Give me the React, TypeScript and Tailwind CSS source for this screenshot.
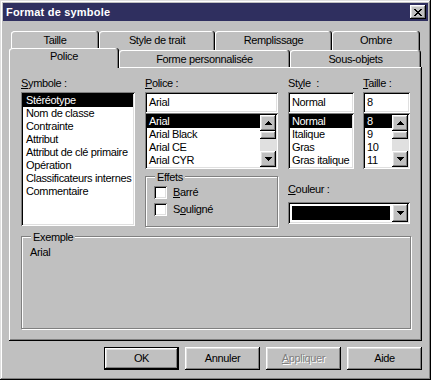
import React from "react"

const sunken =
  "shadow-[inset_1px_1px_0_#808080,inset_-1px_-1px_0_#ffffff,inset_2px_2px_0_#000000,inset_-2px_-2px_0_#dfdfdf]"
const raised =
  "shadow-[inset_-1px_-1px_0_#000000,inset_1px_1px_0_#ffffff,inset_-2px_-2px_0_#808080,inset_2px_2px_0_#dfdfdf]"
const etched = "border border-[#808080] shadow-[inset_1px_1px_0_#ffffff,1px_1px_0_#ffffff]"
const tab =
  "bg-[#c0c0c0] rounded-t-[3px] text-center shadow-[inset_-1px_0_0_#000000,inset_1px_1px_0_#ffffff,inset_-2px_0_0_#808080]"

function Mn({ children }: { children: React.ReactNode }) {
  return <span className="underline decoration-1 underline-offset-[1px]">{children}</span>
}

function Arrow({ up }: { up?: boolean }) {
  return (
    <svg width="7" height="4" viewBox="0 0 7 4" shapeRendering="crispEdges">
      {up ? (
        <path d="M3 0h1v1h1v1h1v1h1v1H0V3h1V2h1V1h1z" fill="#000" />
      ) : (
        <path d="M0 0h7v1H6v1H5v1H4v1H3V3H2V2H1V1H0z" fill="#000" />
      )}
    </svg>
  )
}

function CloseGlyph() {
  const px = [
    [0, 0], [1, 0], [6, 0], [7, 0],
    [1, 1], [2, 1], [5, 1], [6, 1],
    [2, 2], [3, 2], [4, 2], [5, 2],
    [3, 3], [4, 3],
    [2, 4], [3, 4], [4, 4], [5, 4],
    [1, 5], [2, 5], [5, 5], [6, 5],
    [0, 6], [1, 6], [6, 6], [7, 6],
  ]
  return (
    <svg width="8" height="7" viewBox="0 0 8 7" shapeRendering="crispEdges">
      {px.map(([x, y]) => (
        <rect key={`${x}-${y}`} x={x} y={y} width="1" height="1" fill="#000" />
      ))}
    </svg>
  )
}

function ScrollBar() {
  return (
    <div className="flex w-[16px] flex-col">
      <div className={`flex h-[16px] items-center justify-center bg-[#c0c0c0] ${raised}`}>
        <Arrow up />
      </div>
      <div className={`h-[8px] bg-[#c0c0c0] ${raised}`} />
      <div className="flex-1 bg-[#e0e0e0]" />
      <div className={`flex h-[16px] items-center justify-center bg-[#c0c0c0] ${raised}`}>
        <Arrow />
      </div>
    </div>
  )
}

function Items({ items, pad = "pl-[2px]" }: { items: string[]; pad?: string }) {
  return (
    <div className="min-w-0 flex-1 overflow-hidden">
      {items.map((it, i) => (
        <div
          key={it}
          className={`h-[13px] whitespace-nowrap leading-[13px] ${pad} ${i === 0 ? "bg-black text-white" : ""}`}
        >
          {it}
        </div>
      ))}
    </div>
  )
}

function TextBox({ value }: { value: string }) {
  return (
    <div className={`flex h-[21px] items-center bg-white pl-[4px] ${sunken}`}>
      <span className="leading-[13px]">{value}</span>
    </div>
  )
}

function Label({ children }: { children: React.ReactNode }) {
  return <div className="h-[13px] whitespace-nowrap leading-[13px]">{children}</div>
}

function Check({ children }: { children: React.ReactNode }) {
  return (
    <div className="flex h-[13px] items-center">
      <div className={`h-[13px] w-[13px] bg-white ${sunken}`} />
      <span className="ml-[6px] leading-[13px]">{children}</span>
    </div>
  )
}

function Btn({ children, def, disabled }: { children: React.ReactNode; def?: boolean; disabled?: boolean }) {
  return (
    <div
      className={`flex h-[23px] w-[75px] items-center justify-center bg-[#c0c0c0] ${raised} ${def ? "border border-black" : ""} ${
        disabled ? "text-[#808080] [text-shadow:1px_1px_0_#ffffff]" : ""
      }`}
    >
      {children}
    </div>
  )
}

export default function App() {
  return (
    <div
      className={`h-[380px] w-[431px] overflow-hidden bg-[#c0c0c0] p-[3px] font-['Liberation_Sans',Arial,sans-serif] text-[11px] leading-[13px] tracking-[-0.35px] text-black shadow-[inset_-1px_-1px_0_#000000,inset_1px_1px_0_#dfdfdf,inset_-2px_-2px_0_#808080,inset_2px_2px_0_#ffffff]`}
    >
      {/* title bar */}
      <div className="flex h-[18px] items-center justify-between bg-[#2f2f5f] pl-[3px] pr-[2px]">
        <span className="text-[11px] font-bold tracking-[0.2px] text-white">Format de symbole</span>
        <div className={`flex h-[14px] w-[16px] items-center justify-center bg-[#c0c0c0] ${raised}`}>
          <CloseGlyph />
        </div>
      </div>

      <div className="px-[6px]">
        {/* back row of tabs */}
        <div className="-mb-[2px] ml-[2px] mt-[10px] flex h-[19px]">
          <div className={`w-[88px] pt-[3px] ${tab}`}>Taille</div>
          <div className={`w-[116px] pt-[3px] ${tab}`}>Style de trait</div>
          <div className={`w-[117px] pt-[3px] ${tab}`}>Remplissage</div>
          <div className={`w-[88px] pt-[3px] ${tab}`}>Ombre</div>
        </div>
        {/* front row of tabs */}
        <div className="relative flex h-[19px] items-end">
          <div className={`relative z-10 -mb-px h-[20px] w-[110px] pt-[2px] ${tab}`}>Police</div>
          <div className={`h-[17px] w-[171px] pt-[3px] ${tab}`}>Forme personnalisée</div>
          <div className={`h-[17px] w-[131px] pt-[3px] ${tab}`}>Sous-objets</div>
        </div>

        {/* tab panel */}
        <div className="h-[274px] pl-[12px] pt-[10px] shadow-[inset_-1px_-1px_0_#000000,inset_1px_1px_0_#ffffff,inset_-2px_-2px_0_#808080]">
          <div className="flex">
            <div className="w-[114px]">
              <Label>
                <Mn>S</Mn>ymbole :
              </Label>
              <div className={`mt-[2px] h-[134px] bg-white p-[2px] ${sunken}`}>
                <Items
                  pad="pl-[3px]"
                  items={[
                    "Stéréotype",
                    "Nom de classe",
                    "Contrainte",
                    "Attribut",
                    "Attribut de clé primaire",
                    "Opération",
                    "Classificateurs internes",
                    "Commentaire",
                  ]}
                />
              </div>
            </div>

            <div className="ml-[10px] w-[133px]">
              <Label>
                <Mn>P</Mn>olice :
              </Label>
              <div className="mt-[2px]">
                <TextBox value="Arial" />
              </div>
              <div className={`flex h-[56px] bg-white p-[2px] ${sunken}`}>
                <Items items={["Arial", "Arial Black", "Arial CE", "Arial CYR"]} />
                <ScrollBar />
              </div>
              <div className={`relative mt-[7px] h-[51px] ${etched}`}>
                <span className="absolute -top-[6px] left-[9px] bg-[#c0c0c0] px-[2px]">Effets</span>
                <div className="flex flex-col gap-[4px] pl-[8px] pt-[9px]">
                  <Check>
                    <Mn>B</Mn>arré
                  </Check>
                  <Check>
                    S<Mn>o</Mn>uligné
                  </Check>
                </div>
              </div>
            </div>

            <div className="ml-[10px] w-[122px]">
              <div className="flex">
                <div className="w-[66px]">
                  <Label>
                    St<Mn>y</Mn>le&nbsp; :
                  </Label>
                  <div className="mt-[2px]">
                    <TextBox value="Normal" />
                  </div>
                  <div className={`flex h-[56px] bg-white p-[2px] ${sunken}`}>
                    <Items items={["Normal", "Italique", "Gras", "Gras italique"]} />
                  </div>
                </div>
                <div className="ml-[9px] w-[47px]">
                  <Label>
                    <Mn>T</Mn>aille :
                  </Label>
                  <div className="mt-[2px]">
                    <TextBox value="8" />
                  </div>
                  <div className={`flex h-[56px] bg-white p-[2px] ${sunken}`}>
                    <Items items={["8", "9", "10", "11"]} />
                    <ScrollBar />
                  </div>
                </div>
              </div>
              <div className="mt-[14px]">
                <Label>
                  <Mn>C</Mn>ouleur :
                </Label>
              </div>
              <div className={`mt-[6px] flex h-[22px] w-[122px] bg-white p-[2px] ${sunken}`}>
                <div className="flex-1 p-[2px]">
                  <div className="h-full bg-black" />
                </div>
                <div className={`flex w-[16px] items-center justify-center bg-[#c0c0c0] ${raised}`}>
                  <Arrow />
                </div>
              </div>
            </div>
          </div>

          <div className={`relative mt-[9px] h-[93px] w-[390px] ${etched}`}>
            <span className="absolute -top-[6px] left-[9px] bg-[#c0c0c0] px-[2px]">Exemple</span>
            <div className="pl-[8px] pt-[9px]">Arial</div>
          </div>
        </div>

        {/* buttons */}
        <div className="mt-[6px] flex justify-end gap-[6px]">
          <Btn def>OK</Btn>
          <Btn>Annuler</Btn>
          <Btn disabled>
            <Mn>A</Mn>ppliquer
          </Btn>
          <Btn>Aide</Btn>
        </div>
      </div>
    </div>
  )
}
